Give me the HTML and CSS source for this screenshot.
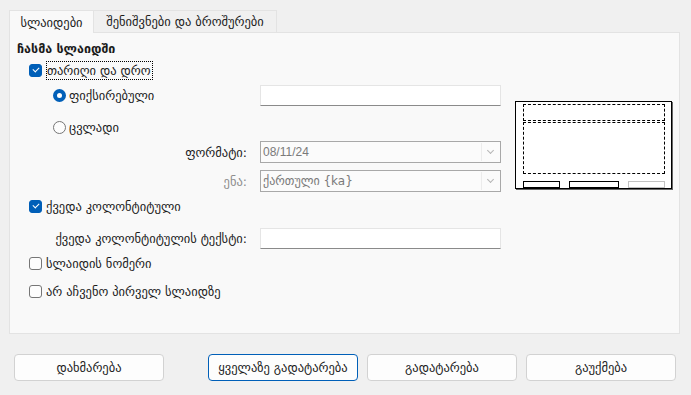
FILE: index.html
```html
<!DOCTYPE html>
<html lang="ka">
<head>
    <meta charset="UTF-8">
    <title>თავსართი და ქვედა კოლონტიტული</title>
    <link rel="stylesheet" href="styles.css">
</head>
<body>
    <div class="dialog">
        <div class="tabs">
            <div class="tab active">სლაიდები</div>
            <div class="tab">შენიშვნები და ბროშურები</div>
        </div>
        <div class="panel">
            <div class="form">
                <div class="row heading">ჩასმა სლაიდში</div>
                <div class="row row-date">
                    <span class="check on"></span>
                    <span class="focus">თარიღი და დრო</span>
                </div>
                <div class="row row-fixed">
                    <span class="radio on"></span>
                    <span class="radio-text">ფიქსირებული</span>
                    <span class="field fixed-field"></span>
                </div>
                <div class="row row-var">
                    <span class="radio"></span>
                    <span class="radio-text">ცვლადი</span>
                </div>
                <div class="row row-format">
                    <span class="label">ფორმატი:</span>
                    <span class="select">08/11/24<span class="chev"></span></span>
                </div>
                <div class="row row-lang">
                    <span class="label muted">ენა:</span>
                    <span class="select">ქართული {ka}<span class="chev"></span></span>
                </div>
                <div class="row row-footer">
                    <span class="check on"></span>
                    <span class="check-text">ქვედა კოლონტიტული</span>
                </div>
                <div class="row row-footer-text">
                    <span class="label">ქვედა კოლონტიტულის ტექსტი:</span>
                    <span class="field"></span>
                </div>
                <div class="row row-num">
                    <span class="check"></span>
                    <span class="check-text">სლაიდის ნომერი</span>
                </div>
                <div class="row row-first">
                    <span class="check"></span>
                    <span class="check-text">არ აჩვენო პირველ სლაიდზე</span>
                </div>
            </div>
            <div class="preview">
                <div class="pv-head"></div>
                <div class="pv-body"></div>
                <div class="pv-foot">
                    <span class="pv-date"></span>
                    <span class="pv-text"></span>
                    <span class="pv-num"></span>
                </div>
            </div>
        </div>
        <div class="buttons">
            <button class="btn">დახმარება</button>
            <button class="btn default">ყველაზე გადატარება</button>
            <button class="btn">გადატარება</button>
            <button class="btn">გაუქმება</button>
        </div>
    </div>
</body>
</html>
```

FILE: styles.css
```css
* {
    margin: 0;
    padding: 0;
    box-sizing: border-box;
}
body {
    background: #f0f0f0;
    font-family: "DejaVu Sans", sans-serif;
    font-size: 12.5px;
    color: #1b1b1b;
}
.dialog {
    padding: 9px 11px 0 9px;
}
.tabs {
    display: flex;
    height: 23px;
    align-items: flex-end;
}
.tab {
    height: 22px;
    padding: 0 6px;
    border: 1px solid #e3e3e3;
    border-bottom: none;
    background: #f0f0f0;
    display: flex;
    align-items: center;
    justify-content: center;
    white-space: nowrap;
}
.tab.active {
    width: 84px;
    height: 23px;
    background: #f9f9f9;
    margin-bottom: -1px;
    position: relative;
    border-right: none;
}
.tab:not(.active) {
    width: 184px;
}
.panel {
    height: 302px;
    background: #f9f9f9;
    border: 1px solid #e3e3e3;
    padding: 5px 0 0 7px;
    display: flex;
    gap: 14px;
}
.form {
    width: 484px;
    flex-shrink: 0;
}
.row {
    display: flex;
    align-items: center;
    height: 22px;
    white-space: nowrap;
}
.heading {
    font-weight: bold;
    height: 21px;
}
.row-fixed { margin-top: 3px; }
.row-var { margin-top: 10px; }
.row-format { margin-top: 3px; }
.row-lang { margin-top: 7px; }
.row-footer { margin-top: 3px; }
.row-footer-text { margin-top: 10px; }
.row-num { margin-top: 3px; }
.row-first { margin-top: 6px; }
.check {
    width: 13px;
    height: 13px;
    margin-left: 12px;
    margin-right: 4px;
    border: 1px solid #767676;
    border-radius: 3px;
    background: #fdfdfd;
    position: relative;
    flex-shrink: 0;
}
.check.on {
    background: #005fb8;
    border-color: #005fb8;
}
.check.on::after {
    content: "";
    position: absolute;
    left: 3px;
    top: 2px;
    width: 5px;
    height: 3px;
    border-left: 1px solid #fff;
    border-bottom: 1px solid #fff;
    transform: rotate(-45deg);
}
.focus {
    border: 1px dotted #000;
    padding: 1px 1px 1px 0;
}
.radio {
    width: 13px;
    height: 13px;
    margin-left: 36px;
    margin-right: 3px;
    border: 1px solid #767676;
    border-radius: 50%;
    background: #fdfdfd;
    flex-shrink: 0;
}
.radio.on {
    border: 4px solid #005fb8;
    background: #fff;
}
.radio-text {
    width: 191px;
}
.field {
    width: 241px;
    height: 21px;
    background: #fff;
    border: 1px solid #e5e5e5;
    border-bottom-color: #8a8a8a;
    margin-left: 13px;
    flex-shrink: 0;
}
.fixed-field {
    margin-left: 0;
}
.label {
    width: 230px;
    text-align: right;
    flex-shrink: 0;
}
.muted {
    color: #8d8d8d;
}
.select {
    width: 241px;
    height: 22px;
    margin-left: 13px;
    border: 1px solid #a8a8a8;
    background: #fbfbfb;
    color: #7a7a7a;
    font-family: "Liberation Sans", "DejaVu Sans", sans-serif;
    font-size: 12px;
    display: flex;
    align-items: center;
    padding-left: 2px;
    position: relative;
    flex-shrink: 0;
}
.row-lang .select {
    font-family: "DejaVu Sans", sans-serif;
    font-size: 12px;
}
.chev {
    position: absolute;
    right: 1px;
    top: 1px;
    width: 18px;
    height: 18px;
    border-left: 1px solid #ececec;
}
.chev::after {
    content: "";
    position: absolute;
    left: 6px;
    top: 5px;
    width: 4px;
    height: 4px;
    border-right: 1px solid #b5b5b5;
    border-bottom: 1px solid #b5b5b5;
    transform: rotate(45deg);
}
.preview {
    margin-top: 63px;
    width: 157px;
    height: 88px;
    background: #fff;
    border: 1px solid #000;
    box-shadow: 1px 1px 0 #666;
    padding: 2px 6px 0 7px;
    display: flex;
    flex-direction: column;
}
.pv-head {
    height: 17px;
    border: 1px dashed #000;
}
.pv-body {
    height: 52px;
    margin-top: 1px;
    border: 1px dashed #000;
}
.pv-foot {
    display: flex;
    margin-top: 7px;
}
.pv-foot span {
    height: 7px;
    border: 1px solid #000;
}
.pv-date { width: 37px; }
.pv-text { width: 50px; margin-left: 9px; }
.pv-num { width: 37px; margin-left: 9px; border-color: #c2c2c2 !important; }
.buttons {
    display: flex;
    margin-top: 20px;
    padding-left: 5px;
}
.btn {
    width: 150px;
    height: 27px;
    flex-shrink: 0;
    background: #fdfdfd;
    border: 1px solid #d2d2d2;
    border-radius: 4px;
    font-family: "DejaVu Sans", sans-serif;
    font-size: 12.5px;
    color: #1b1b1b;
    margin-right: 9px;
}
.btn:first-child {
    margin-right: 44px;
}
.btn.default {
    border-color: #005fb8;
}
```
